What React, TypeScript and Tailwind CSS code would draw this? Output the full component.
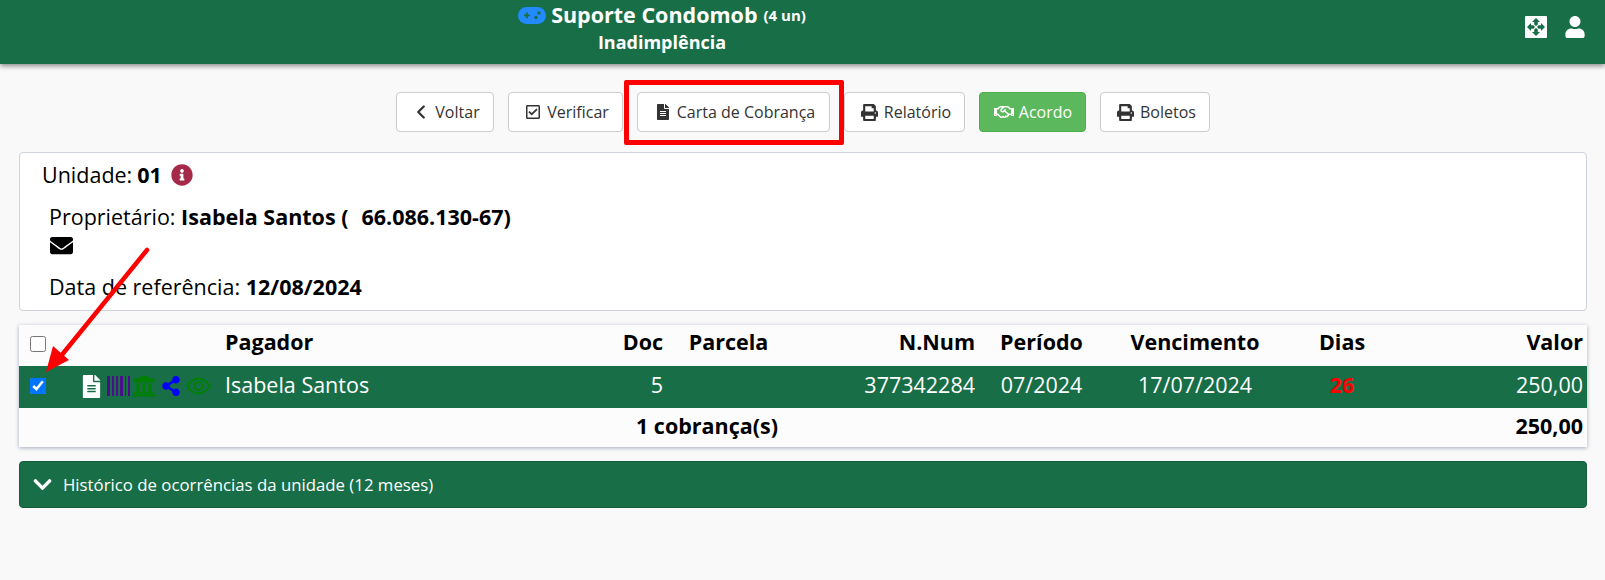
import { ChevronLeft } from "lucide-react"
import {
    FaChevronDown,
    FaEnvelope,
    FaFileAlt,
    FaInfoCircle,
    FaPrint,
    FaRegCheckSquare,
    FaRegHandshake,
    FaShareAlt,
    FaUniversity,
    FaUser,
} from "react-icons/fa"

const font = { fontFamily: '"Open Sans", sans-serif' }

function Gamepad() {
    return (
        <svg width="28" height="17" viewBox="0 0 28 17" className="mr-[5px]">
            <rect x="0" y="0" width="28" height="17" rx="8.500" fill="#2389ff" />
            <path d="M6 7.500h2v-2h1.800v2h2v1.800h-2v2H8v-2H6z" fill="#186e47" />
            <circle cx="21" cy="6" r="1.700" fill="#186e47" />
            <circle cx="18" cy="10.500" r="1.700" fill="#186e47" />
        </svg>
    )
}

function ExpandIcon() {
    return (
        <svg width="22" height="22" viewBox="0 0 22 22">
            <rect width="22" height="22" rx="1" fill="#fff" />
            <g fill="#186e47">
                <polygon points="11,2 15,6 12.800,6 12.800,8.500 11,10 9.200,8.500 9.200,6 7,6" />
                <polygon points="11,20 15,16 12.800,16 12.800,13.500 11,12 9.200,13.500 9.200,16 7,16" />
                <polygon points="2,11 6,15 6,12.800 8.500,12.800 10,11 8.500,9.200 6,9.200 6,7" />
                <polygon points="20,11 16,15 16,12.800 13.500,12.800 12,11 13.500,9.200 16,9.200 16,7" />
            </g>
        </svg>
    )
}

function BarcodeIcon() {
    return (
        <svg width="23" height="20" viewBox="0 0 23 20" fill="#4b0f8c" className="ml-[4px]">
            <rect x="0" width="3" height="20" />
            <rect x="5" width="2" height="20" />
            <rect x="9" width="2" height="20" />
            <rect x="13" width="3" height="20" />
            <rect x="18" width="1" height="20" />
            <rect x="21" width="2" height="20" />
        </svg>
    )
}

function EyeIcon() {
    return (
        <svg width="25" height="18" viewBox="0 0 25 18" fill="none" stroke="#008000" strokeWidth="1.800" className="ml-[5px]">
            <path d="M1.200 9C4.500 4 8 1.500 12.500 1.500S20.500 4 23.800 9c-3.300 5-6.800 7.500-11.300 7.500S4.500 14 1.200 9z" />
            <circle cx="12.500" cy="9" r="4" />
        </svg>
    )
}

function Header() {
    return (
        <header className="flex h-[64px] items-start bg-[#186e47] text-white shadow-[0_2px_5px_rgba(0,0,0,0.45)]">
            <div className="flex w-[1324px] flex-col items-center">
                <div className="flex h-[30px] items-center font-bold">
                    <Gamepad />
                    <span className="text-[21.5px]">Suporte Condomob</span>
                    <span className="ml-[6px] text-[15px]">(4 un)</span>
                </div>
                <div className="text-[18px] leading-[24px] font-bold">Inadimplência</div>
            </div>
            <div className="ml-auto flex items-center gap-[17px] pt-[16px] pr-[19px]">
                <ExpandIcon />
                <FaUser className="size-[22px]" />
            </div>
        </header>
    )
}

function ToolButton({ children, width, green }: { children: React.ReactNode; width: string; green?: boolean }) {
    return (
        <button
            className={
                green
                    ? `flex h-10 items-center justify-center gap-[5px] rounded border border-[#4cae4c] bg-[#5cb85c] pl-[2px] text-[16px] text-white ${width}`
                    : `flex h-10 items-center justify-center gap-[6px] rounded border border-[#ccc] bg-white pl-[4px] text-[16px] text-[#333] ${width}`
            }
        >
            {children}
        </button>
    )
}

function Toolbar() {
    return (
        <div className="mt-[28px] flex justify-center gap-[14px]">
            <ToolButton width="w-[98px]">
                <ChevronLeft className="-mx-[3px] size-[22px]" strokeWidth={2.5} />
                Voltar
            </ToolButton>
            <ToolButton width="w-[115px]">
                <FaRegCheckSquare className="size-[16px]" />
                Verificar
            </ToolButton>
            <ToolButton width="w-[193px]">
                <FaFileAlt className="size-[16px]" />
                Carta de Cobrança
            </ToolButton>
            <ToolButton width="w-[121px]">
                <FaPrint className="size-[17px]" />
                Relatório
            </ToolButton>
            <ToolButton width="w-[107px]" green>
                <FaRegHandshake className="size-[20px]" />
                Acordo
            </ToolButton>
            <ToolButton width="w-[110px]">
                <FaPrint className="size-[17px]" />
                Boletos
            </ToolButton>
        </div>
    )
}

function UnitCard() {
    return (
        <section className="mt-[20px] mr-[18px] ml-[19px] h-[159px] rounded border border-[#ced4da] bg-white text-[21.5px] text-black">
            <div className="flex h-[44px] items-center pl-[22px]">
                <span>Unidade:</span>
                <b className="ml-[5px]">01</b>
                <FaInfoCircle className="ml-[9px] size-[22px] text-[#a52a4a]" />
            </div>
            <div className="pl-[29px]">
                <div className="mt-[5px] leading-[30px]">
                    Proprietário: <b>Isabela Santos (<span className="ml-[13px]">66.086.130-67)</span></b>
                </div>
                <FaEnvelope className="mt-[2px] ml-[1px] size-[23px]" />
                <div className="mt-[15px] leading-[30px]">
                    Data de referência: <b>12/08/2024</b>
                </div>
            </div>
        </section>
    )
}

function ChargesTable() {
    return (
        <section className="mt-[14px] mr-[18px] ml-[19px] bg-[#fcfcfc] shadow-[0_1px_4px_rgba(60,80,120,0.45)]">
            <table className="w-full table-fixed border-collapse text-[21.5px] text-black">
                <colgroup>
                    <col className="w-[198px]" />
                    <col className="w-[383px]" />
                    <col className="w-[71px]" />
                    <col className="w-[115px]" />
                    <col className="w-[197px]" />
                    <col className="w-[117px]" />
                    <col className="w-[190px]" />
                    <col className="w-[104px]" />
                    <col />
                </colgroup>
                <thead>
                    <tr className="h-[41px] font-bold">
                        <th className="pb-[3px] pl-[11px] text-left">
                            <input type="checkbox" className="block size-[16px]" />
                        </th>
                        <th className="px-2 pb-[7px] text-left">Pagador</th>
                        <th className="px-2 pb-[7px] text-right">Doc</th>
                        <th className="px-2 pb-[7px] text-center">Parcela</th>
                        <th className="px-2 pb-[7px] text-right">N.Num</th>
                        <th className="px-2 pb-[7px] text-center">Período</th>
                        <th className="px-2 pb-[7px] text-center">Vencimento</th>
                        <th className="px-2 pb-[7px] text-center">Dias</th>
                        <th className="pr-[4px] pb-[7px] text-right">Valor</th>
                    </tr>
                </thead>
                <tbody>
                    <tr className="h-[42px] bg-[#186e47] text-white">
                        <td className="pb-[2px] pl-[11px]">
                            <div className="flex items-center">
                                <input type="checkbox" defaultChecked className="block size-[16px]" />
                                <FaFileAlt className="ml-[34px] size-[23px] text-white" />
                                <BarcodeIcon />
                                <FaUniversity className="ml-[2px] size-[24px] text-[#008000]" />
                                <FaShareAlt className="ml-[5px] size-[20px] text-[#0000ff]" />
                                <EyeIcon />
                            </div>
                        </td>
                        <td className="px-2 pb-[4px]">Isabela Santos</td>
                        <td className="px-2 pb-[4px] text-right">5</td>
                        <td className="px-2"></td>
                        <td className="px-2 pb-[4px] text-right">377342284</td>
                        <td className="px-2 pb-[4px] text-center">07/2024</td>
                        <td className="px-2 pb-[4px] text-center">17/07/2024</td>
                        <td className="px-2 pb-[4px] text-center font-bold text-[#ff0000]">26</td>
                        <td className="pr-[4px] pb-[4px] text-right">250,00</td>
                    </tr>
                    <tr className="h-[39px] font-bold">
                        <td colSpan={4} className="px-2 pb-[2px] text-right">
                            1 cobrança(s)
                        </td>
                        <td colSpan={4}></td>
                        <td className="pr-[4px] pb-[2px] text-right">250,00</td>
                    </tr>
                </tbody>
            </table>
        </section>
    )
}

function HistoryPanel() {
    return (
        <div className="mt-[14px] mr-[18px] ml-[19px] flex h-[47px] items-center rounded border border-[#145c3b] bg-[#186e47] pl-[12px] text-[16.8px] text-white">
            <FaChevronDown className="size-[21px]" />
            <span className="ml-[10px]">Histórico de ocorrências da unidade (12 meses)</span>
        </div>
    )
}

// marcacoes vermelhas por cima do print
function Annotations() {
    return (
        <>
            <div className="absolute top-[80px] left-[624px] h-[65px] w-[220px] rounded-[2px] border-[5px] border-[#ff0000]" />
            <svg className="absolute top-[240px] left-[36px]" width="120" height="140" viewBox="0 0 120 140">
                <line x1="111" y1="10" x2="25" y2="116" stroke="#ff0000" strokeWidth="4.500" strokeLinecap="round" />
                <polygon points="10,132 17,106 33,120" fill="#ff0000" />
            </svg>
        </>
    )
}

export default function App() {
    return (
        <div className="relative h-[580px] overflow-hidden bg-[#f9f9f9]" style={font}>
            <Header />
            <Toolbar />
            <UnitCard />
            <ChargesTable />
            <HistoryPanel />
            <Annotations />
        </div>
    )
}
